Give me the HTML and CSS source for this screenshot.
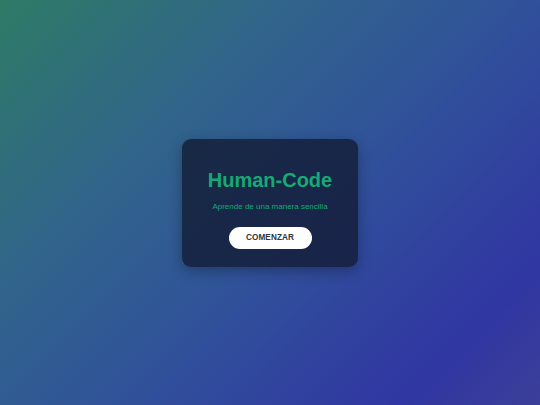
FILE: index.html
```html
<!DOCTYPE html>
<html lang="es">
<head>
<meta charset="utf-8">
<title>Human-Code</title>
<link rel="stylesheet" href="styles.css">
</head>
<body>
<main class="page">
  <section class="card">
    <h1 class="title">Human-Code</h1>
    <p class="subtitle">Aprende de una manera sencilla</p>
    <button class="btn" type="button">COMENZAR</button>
  </section>
</main>
</body>
</html>
```

FILE: styles.css
```css
html, body {
  margin: 0;
  padding: 0;
  height: 100%;
}
body {
  font-family: "Liberation Sans", Arial, sans-serif;
  background: linear-gradient(135deg, #2e7b66 0%, #31658a 30%, #30529a 55%, #3036a2 85%, #3c3f98 100%);
}
.page {
  height: 100%;
  display: flex;
  align-items: center;
  justify-content: center;
}
.card {
  box-sizing: border-box;
  width: 176px;
  padding: 30px 10px 18px;
  border-radius: 9px;
  background: rgba(18, 26, 50, 0.78);
  box-shadow: 0 4px 14px rgba(0, 0, 0, 0.3);
  display: flex;
  flex-direction: column;
  align-items: center;
  text-align: center;
}
.title {
  margin: 0;
  font-size: 20px;
  line-height: 23px;
  font-weight: bold;
  color: #17a974;
}
.subtitle {
  margin: 10px 0 0;
  font-size: 8px;
  line-height: 9px;
  color: #17a974;
}
.btn {
  margin-top: 16px;
  box-sizing: border-box;
  width: 83px;
  height: 22px;
  padding: 0;
  border: none;
  border-radius: 11px;
  background: #ffffff;
  color: #333333;
  font-family: "Liberation Sans", Arial, sans-serif;
  font-size: 8.2px;
  font-weight: bold;
  letter-spacing: 0.1px;
}
```
